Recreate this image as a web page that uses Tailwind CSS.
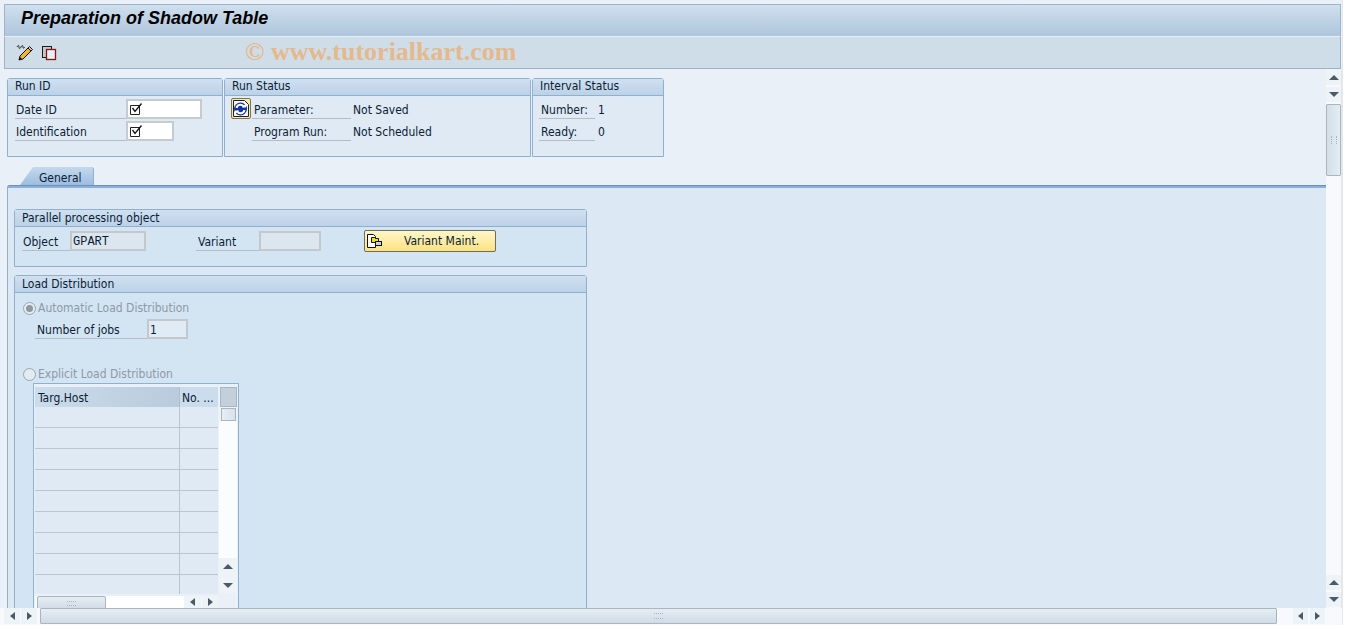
<!DOCTYPE html>
<html><head><script src="https://cdn.jsdelivr.net/npm/@tailwindcss/browser@4"></script></head>
<body class="m-0 bg-white">
<div class="w-[1356px] h-[630px] overflow-hidden relative bg-white font-['DejaVu_Sans_Condensed','DejaVu_Sans',sans-serif] text-[12px] leading-[18px] text-[#0b1c36]">
  <div class="w-[1343px] h-[625px] bg-[#e9f0f8] flex flex-col pt-[4px] border-r border-[#e4e8ec]">
    <!-- title -->
    <div class="ml-[4px] mr-[1px] h-[32px] shrink-0 bg-gradient-to-b from-[#cfe0ee] to-[#aec5dc] border-t border-x border-[#9fb3c6] pl-[16px] pb-[6px] flex items-center">
      <span class="font-['Liberation_Sans',sans-serif] font-bold italic text-[18px] text-black">Preparation of Shadow Table</span>
    </div>
    <!-- toolbar -->
    <div class="ml-[4px] mr-[1px] h-[33px] shrink-0 bg-[#cfdde8] border-t border-t-[#e6eef5] border-x border-b border-[#9fb3c6] flex items-center pl-[11px] gap-[7px]">
      <svg width="18" height="18" viewBox="0 0 18 18"><path d="M1 3c1-2 2-2 2 0s1 2 2 0 2-2 2 0 1 1 2 0" fill="none" stroke="#222" stroke-width="1"/><path d="M3 16l1-4 8-8 3 3-8 8z" fill="#f2b632" stroke="#111"/><path d="M12 4l1.500-1.500 3 3L15 7z" fill="#e9c3cb" stroke="#111"/><path d="M3 16l1-3 2 2z" fill="#111"/></svg>
      <svg width="16" height="16" viewBox="0 0 16 16"><rect x="1.500" y="1.500" width="9" height="11" fill="#c9c9c9" stroke="#1a1a1a"/><rect x="5.500" y="4.500" width="9" height="10" fill="#e6eff7" stroke="#8f1010" stroke-width="1.300"/></svg>
      <span class="ml-[181px] -mt-[2px] font-['Liberation_Serif',serif] font-bold text-[26px] text-[#e5b98c]">© www.tutorialkart.com</span>
    </div>
    <!-- body -->
    <div class="flex flex-1 min-h-0">
      <div class="w-[1326px] shrink-0 flex flex-col min-h-0 overflow-hidden">
        <div class="flex gap-[1px] pl-[7px] pt-[9px] h-[96px] shrink-0">
          <section class="w-[216px] h-[79px] bg-[#dfeaf4] border border-[#8fb0cf] rounded-t-[3px]">
            <h2 class="h-[17px] leading-[15px] pl-[7px] bg-gradient-to-b from-[#cfe0f0] to-[#bcd2e7] border-b border-[#8fb0cf]">Run ID</h2>
            <div class="pl-[7px] pt-[3px]">
              <div class="flex h-[22px]"><label class="w-[111px] h-[20px] leading-[22px] pl-[1px] border-b border-[#b5bdc4]">Date ID</label><span class="w-[76px] h-[20px] bg-white border-2 border-[#c6cbcf] pl-[1px] flex items-center"><svg width="14" height="14" viewBox="0 0 14 14"><path d="M1.500 3.500h9v9h-9z" fill="none" stroke="#222"/><path d="M3.500 6l2.500 3.500L12.500 1.500" fill="none" stroke="#111" stroke-width="1.300"/></svg></span></div>
              <div class="flex h-[22px]"><label class="w-[111px] h-[20px] leading-[22px] pl-[1px] border-b border-[#b5bdc4]">Identification</label><span class="w-[48px] h-[20px] bg-white border-2 border-[#c6cbcf] pl-[1px] flex items-center"><svg width="14" height="14" viewBox="0 0 14 14"><path d="M1.500 3.500h9v9h-9z" fill="none" stroke="#222"/><path d="M3.500 6l2.500 3.500L12.500 1.500" fill="none" stroke="#111" stroke-width="1.300"/></svg></span></div>
            </div>
          </section>
          <section class="w-[307px] h-[79px] bg-[#dfeaf4] border border-[#8fb0cf] rounded-t-[3px]">
            <h2 class="h-[17px] leading-[15px] pl-[7px] bg-gradient-to-b from-[#cfe0f0] to-[#bcd2e7] border-b border-[#8fb0cf]">Run Status</h2>
            <div class="pt-[3px] pl-[6px] flex">
              <span class="w-[20px] h-[21px] -mt-[1px] mr-[1px] shrink-0 rounded-[2px] border border-[#7a7455] bg-[#f7e9a8] flex items-center justify-center"><svg width="18" height="19" viewBox="0 0 18 19"><path d="M1.500 1.500h11l4 4v12h-15z" fill="#f4f7fb" stroke="#222"/><circle cx="8.500" cy="10" r="6.500" fill="#12339f"/><path d="M4.500 9a4 4 0 0 1 7.500-1M12.500 11a4 4 0 0 1-7.500 1" fill="none" stroke="#fff" stroke-width="2"/><path d="M10 8.500h4V4.500zM7 11.500H3v4z" fill="#fff"/></svg></span>
              <div>
                <div class="flex h-[22px]"><label class="w-[99px] h-[20px] leading-[22px] pl-[2px] border-b border-[#b5bdc4]">Parameter:</label><span class="pl-[2px] leading-[22px]">Not Saved</span></div>
                <div class="flex h-[22px]"><label class="w-[99px] h-[20px] leading-[22px] pl-[2px] border-b border-[#b5bdc4]">Program Run:</label><span class="pl-[2px] leading-[22px]">Not Scheduled</span></div>
              </div>
            </div>
          </section>
          <section class="w-[132px] h-[79px] bg-[#dfeaf4] border border-[#8fb0cf] rounded-t-[3px]">
            <h2 class="h-[17px] leading-[15px] pl-[7px] bg-gradient-to-b from-[#cfe0f0] to-[#bcd2e7] border-b border-[#8fb0cf]">Interval Status</h2>
            <div class="pt-[3px] pl-[6px]">
              <div class="flex h-[22px]"><label class="w-[56px] h-[20px] leading-[22px] pl-[2px] border-b border-[#b5bdc4]">Number:</label><span class="pl-[3px] leading-[22px]">1</span></div>
              <div class="flex h-[22px]"><label class="w-[56px] h-[20px] leading-[22px] pl-[2px] border-b border-[#b5bdc4]">Ready:</label><span class="pl-[3px] leading-[22px]">0</span></div>
            </div>
          </section>
        </div>
        <!-- tab -->
        <div class="h-[20px] shrink-0 flex items-end pl-[33px] relative">
          <svg class="absolute left-[20px] bottom-0" width="14" height="18" viewBox="0 0 14 18"><defs><linearGradient id="tabg" x1="0" y1="0" x2="0" y2="1"><stop offset="0" stop-color="#c4d9ee"/><stop offset="1" stop-color="#9dbde0"/></linearGradient></defs><path d="M0 18 L13 0 H14 V18 Z" fill="url(#tabg)"/></svg>
          <div class="relative w-[61px] h-[18px] rounded-tr-[3px] bg-gradient-to-b from-[#c4d9ee] to-[#9dbde0] border-r border-[#8fb0cf] leading-[22px] pl-[6px]">General</div>
        </div>
        <div class="h-[3px] shrink-0 ml-[7px] rounded-tl-[3px] bg-[#8cb0da] border-t border-[#6b90ba]"></div>
        <div class="flex-1 min-h-0 ml-[7px] border-l border-[#8fb0cf] bg-[#dcE9f4] pt-[21px] pl-[6px] overflow-hidden">
          <section class="w-[573px] h-[58px] bg-[#d3e4f3] border border-[#8fb0cf] rounded-t-[3px]">
            <h2 class="h-[17px] leading-[16px] pl-[7px] bg-gradient-to-b from-[#cfe0f0] to-[#bcd2e7] border-b border-[#8fb0cf]">Parallel processing object</h2>
            <div class="flex items-start pl-[7px] pt-[4px]">
              <label class="w-[48px] h-[20px] leading-[22px] pl-[1px] border-b border-[#b5bdc4]">Object</label>
              <span class="w-[76px] h-[20px] bg-[#dce6ef] border-2 border-[#c3c8cc] pl-[1px] font-['Liberation_Mono',monospace] text-[12px] leading-[18px]">GPART</span>
              <label class="ml-[50px] w-[63px] h-[20px] leading-[22px] pl-[2px] border-b border-[#b5bdc4]">Variant</label>
              <span class="w-[62px] h-[20px] bg-[#dce6ef] border-2 border-[#c3c8cc]"></span>
              <button class="ml-[43px] -mt-[1px] w-[132px] h-[22px] rounded-[2px] border border-[#6c6c60] bg-gradient-to-b from-[#fff7c8] to-[#fde27f] flex items-center pl-[1px]">
                <svg width="17" height="17" viewBox="0 0 17 17"><path d="M1.500 1.500h6l2 2v11h-8z" fill="#fff" stroke="#111"/><path d="M5.500 4.500h3l1 1h3v4h-7z" fill="#f2e400" stroke="#111"/><rect x="9.500" y="8.500" width="6" height="4" fill="#c6d4e6" stroke="#111"/></svg>
                <span class="ml-[21px]">Variant Maint.</span>
              </button>
            </div>
          </section>
          <section class="mt-[8px] w-[573px] h-[400px] bg-[#d3e4f3] border border-[#8fb0cf] rounded-t-[3px]">
            <h2 class="h-[17px] leading-[16px] pl-[7px] bg-gradient-to-b from-[#cfe0f0] to-[#bcd2e7] border-b border-[#8fb0cf]">Load Distribution</h2>
            <div class="pl-[8px] pt-[5px]">
              <div class="flex items-center h-[20px] text-[#8d9aa6]"><span class="w-[13px] h-[13px] rounded-full border border-[#9aa5ae] bg-[#e4ecf3] flex items-center justify-center mr-[2px]"><span class="w-[7px] h-[7px] rounded-full bg-[#8e98a1]"></span></span>Automatic Load Distribution</div>
              <div class="flex items-start h-[46px] pl-[12px] pt-[1px]"><label class="w-[112px] h-[20px] leading-[22px] pl-[2px] border-b border-[#b5bdc4]">Number of jobs</label><span class="w-[41px] h-[20px] bg-[#dfebf5] border-2 border-[#c3c8cc] pl-[1px] leading-[18px]">1</span></div>
              <div class="flex items-center h-[20px] text-[#8d9aa6]"><span class="w-[13px] h-[13px] rounded-full border border-[#9aa5ae] bg-[#e4ecf3] mr-[2px]"></span>Explicit Load Distribution</div>
              <!-- table -->
              <div class="ml-[10px] mt-[-1px] w-[206px] h-[240px] border border-[#8fb0cf] bg-[#e9f0f7] relative">
                <div class="flex pt-[3px] pl-[1px]">
                  <div class="w-[183px]">
                    <div class="flex h-[20px] leading-[22px]"><div class="w-[145px] bg-gradient-to-r from-[#cbdcec] to-[#b9cbdc] pl-[3px] border-r border-[#aebfce]">Targ.Host</div><div class="flex-1 bg-[#cbdcec] pl-[2px]">No. ...</div></div>
                    <div class="h-[21px] bg-[#dfeaf4] border-b border-[#b8c6d2] flex"><div class="w-[145px] border-r border-[#b8c6d2]"></div></div>
                    <div class="h-[21px] bg-[#dfeaf4] border-b border-[#b8c6d2] flex"><div class="w-[145px] border-r border-[#b8c6d2]"></div></div>
                    <div class="h-[21px] bg-[#dfeaf4] border-b border-[#b8c6d2] flex"><div class="w-[145px] border-r border-[#b8c6d2]"></div></div>
                    <div class="h-[21px] bg-[#dfeaf4] border-b border-[#b8c6d2] flex"><div class="w-[145px] border-r border-[#b8c6d2]"></div></div>
                    <div class="h-[21px] bg-[#dfeaf4] border-b border-[#b8c6d2] flex"><div class="w-[145px] border-r border-[#b8c6d2]"></div></div>
                    <div class="h-[21px] bg-[#dfeaf4] border-b border-[#b8c6d2] flex"><div class="w-[145px] border-r border-[#b8c6d2]"></div></div>
                    <div class="h-[21px] bg-[#dfeaf4] border-b border-[#b8c6d2] flex"><div class="w-[145px] border-r border-[#b8c6d2]"></div></div>
                    <div class="h-[21px] bg-[#dfeaf4] border-b border-[#b8c6d2] flex"><div class="w-[145px] border-r border-[#b8c6d2]"></div></div>
                    <div class="h-[19px] bg-[#dfeaf4] flex"><div class="w-[145px] border-r border-[#b8c6d2]"></div></div>
                    <div class="h-[14px] mt-[2px] flex items-start pl-[2px] bg-[#f7f9fc]">
                      <div class="w-[69px] h-[14px] border border-[#a9b5bf] rounded-t-[2px] bg-gradient-to-b from-[#e6edf4] to-[#cfdbe6] flex justify-center pt-[4px]"><span class="w-[9px] h-[5px] border-y border-dotted border-[#a8b3bd]"></span></div>
                      <div class="flex-1 h-[14px] bg-white"></div>
                      <div class="w-[17px] h-[12px] flex items-center justify-center bg-[#eef3f8] mr-[1px]"><span class="w-0 h-0 border-y-[4px] border-y-transparent border-r-[5px] border-r-[#4a5a68]"></span></div>
                      <div class="w-[16px] h-[12px] flex items-center justify-center bg-[#eef3f8]"><span class="w-0 h-0 border-y-[4px] border-y-transparent border-l-[5px] border-l-[#4a5a68]"></span></div>
                    </div>
                  </div>
                  <div class="w-[18px] ml-[1px] flex flex-col items-center bg-[#eef3f8] h-[206px]">
                    <div class="w-[17px] h-[20px] bg-[#c3cfda] border border-[#a9b5bf]"></div>
                    <div class="w-[15px] h-[13px] mt-[1px] border border-[#a9b5bf] bg-gradient-to-r from-[#e6edf4] to-[#d8e3ed]"></div>
                    <div class="flex-1 w-full bg-[#fbfcfe]"></div>
                    <div class="w-full h-[17px] flex items-center justify-center"><span class="w-0 h-0 border-x-[5px] border-x-transparent border-b-[5px] border-b-[#4a5a68]"></span></div>
                    <div class="w-full h-[16px] mt-[2px] flex items-center justify-center"><span class="w-0 h-0 border-x-[5px] border-x-transparent border-t-[5px] border-t-[#4a5a68]"></span></div>
                  </div>
                </div>
              </div>
            </div>
          </section>
        </div>
      </div>
      <!-- v scroll -->
      <div class="w-[16px] shrink-0 flex flex-col items-center bg-[#f7f9fc] border-r border-[#e4e8ec]">
        <div class="w-[15px] h-[16px] flex items-center justify-center bg-[#eef3f8]"><span class="w-0 h-0 border-x-[5px] border-x-transparent border-b-[5px] border-b-[#4a5a68]"></span></div>
        <div class="w-[15px] h-[15px] mt-[2px] flex items-center justify-center bg-[#eef3f8]"><span class="w-0 h-0 border-x-[5px] border-x-transparent border-t-[5px] border-t-[#4a5a68]"></span></div>
        <div class="w-[15px] h-[72px] mt-[2px] rounded-[1px] border border-[#a9b5bf] bg-gradient-to-r from-[#d3dee8] to-[#e4edf4] flex items-center justify-center"><span class="w-[6px] h-[8px] border-x border-dotted border-[#a8b3bd]"></span></div>
        <div class="flex-1"></div>
        <div class="w-[15px] h-[15px] flex items-center justify-center bg-[#eef3f8]"><span class="w-0 h-0 border-x-[5px] border-x-transparent border-b-[5px] border-b-[#4a5a68]"></span></div>
        <div class="w-[15px] h-[15px] mt-[2px] mb-[1px] flex items-center justify-center bg-[#eef3f8]"><span class="w-0 h-0 border-x-[5px] border-x-transparent border-t-[5px] border-t-[#4a5a68]"></span></div>
      </div>
    </div>
    <!-- h scroll -->
    <div class="h-[17px] shrink-0 flex items-stretch bg-[#f7f9fc] pl-[4px] pb-[1px]">
      <div class="w-[16px] flex items-center justify-center bg-[#eef3f8]"><span class="w-0 h-0 border-y-[4px] border-y-transparent border-r-[5px] border-r-[#4a5a68]"></span></div>
      <div class="w-[16px] ml-[1px] mr-[3px] flex items-center justify-center bg-[#eef3f8]"><span class="w-0 h-0 border-y-[4px] border-y-transparent border-l-[5px] border-l-[#4a5a68]"></span></div>
      <div class="w-[1237px] rounded-[1px] border border-[#a9b5bf] bg-gradient-to-b from-[#e6edf4] to-[#cfdbe6] flex items-center justify-center"><span class="w-[9px] h-[6px] border-y border-dotted border-[#a8b3bd]"></span></div>
      <div class="w-[15px] ml-[16px] flex items-center justify-center bg-[#eef3f8]"><span class="w-0 h-0 border-y-[4px] border-y-transparent border-r-[5px] border-r-[#4a5a68]"></span></div>
      <div class="w-[15px] ml-[2px] flex items-center justify-center bg-[#eef3f8]"><span class="w-0 h-0 border-y-[4px] border-y-transparent border-l-[5px] border-l-[#4a5a68]"></span></div>
    </div>
  </div>
</div>
</body></html>
